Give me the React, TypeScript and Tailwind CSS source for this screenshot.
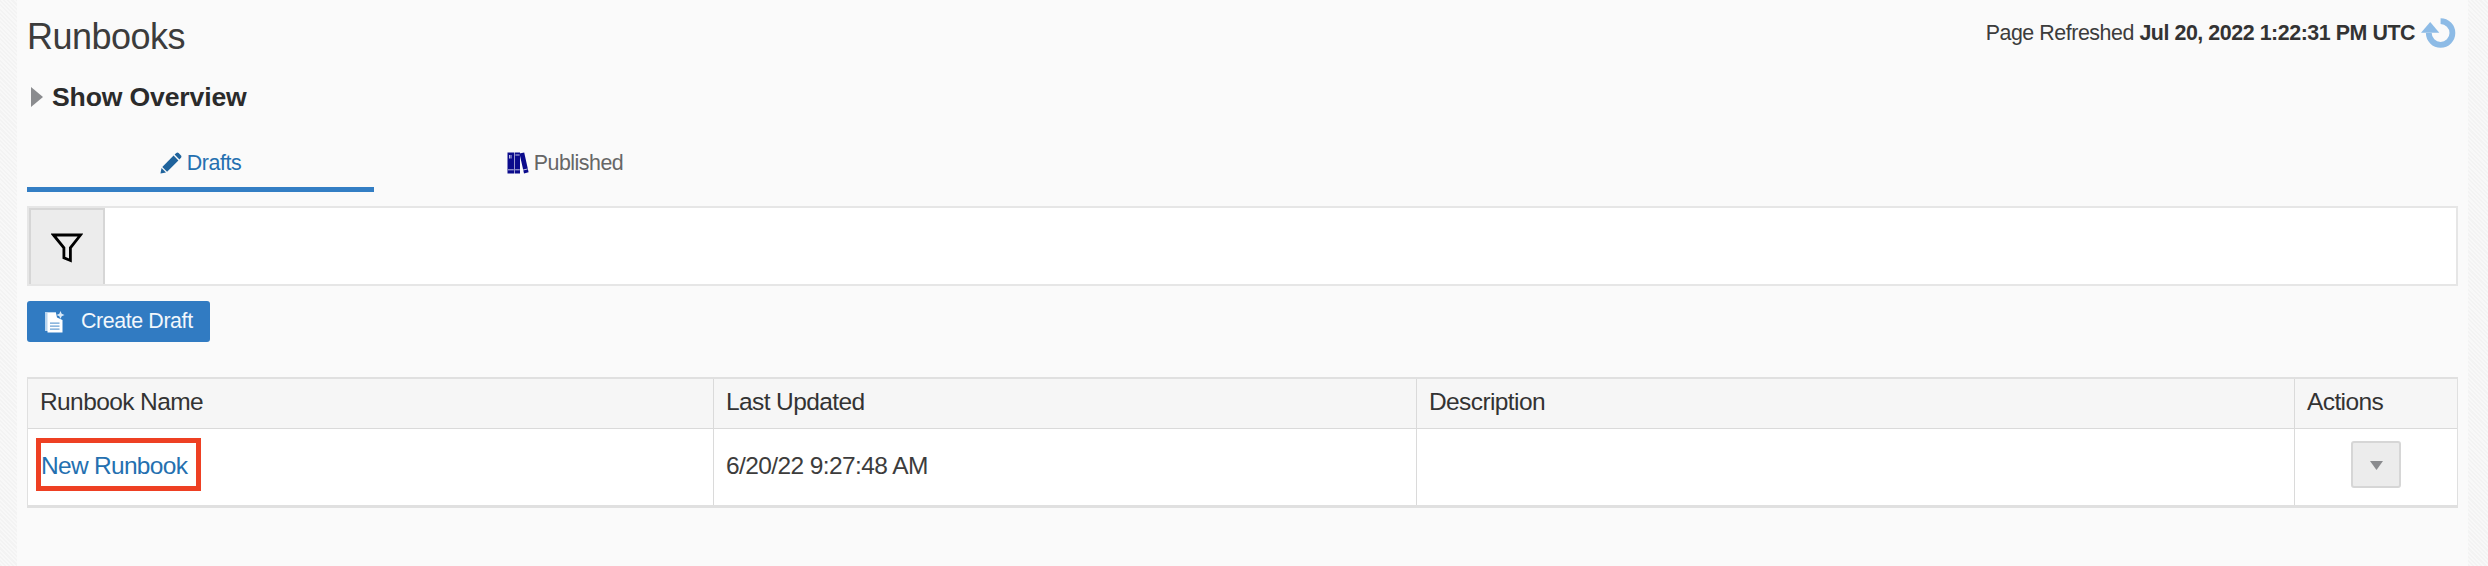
function PencilIcon() {
  return (
    <svg className="h-[22px] w-[22px]" viewBox="0 0 22 22" fill="#1f639c">
      <path d="M.5 21.5 1.5 16 6 20.5Z" />
      <path d="M2.3 15 13.6 3.6 18.4 8.4 7.1 19.7Z" />
      <path d="M14.6 2.6 16.3 1Q17.5 0 18.6 1L21 3.4Q22 4.5 21 5.7L19.4 7.4Z" />
    </svg>
  );
}

function BooksIcon() {
  return (
    <svg className="h-[22px] w-[22px]" viewBox="0 0 22 22">
      <path fill="#0b0b8c" d="M.5.5H7V21.5H.5ZM7.6.5H13V21.5H7.6ZM12.5 1.6 17.2.5 21.6 20.2 17 21.4Z" />
      <path stroke="#d4d4ee" strokeWidth=".9" d="M1 17.8H6.8M8.2 17.8H12.8M8.4 3H12.6M16 18 20.6 17M2.5 3V6.5M4 3V6.5" />
    </svg>
  );
}

function RefreshIcon() {
  return (
    <svg className="h-[32px] w-[36px]" viewBox="0 0 36 32">
      <path d="M19.6 4.2A11.8 11.8 0 1 1 7.8 16" fill="none" stroke="#8dbbe6" strokeWidth="5.8" />
      <path d="M0 15.8 9.2 5 18.3 15.8Z" fill="#8dbbe6" />
    </svg>
  );
}

function DraftIcon() {
  return (
    <svg className="h-[22px] w-[20px]" viewBox="0 0 20 22">
      <path fill="#b9d5ee" d="M0 1H11V3H3V20H0Z" />
      <path fill="#fff" d="M2.5 2H11L12 6.5 17.5 9V21.5H2.5Z" />
      <path fill="#d9e9f7" d="M15.5 0 16.7 2.8 19.5 4 16.7 5.2 15.5 8 14.3 5.2 11.5 4 14.3 2.8Z" />
      <path stroke="#69a0d4" strokeWidth="1.3" d="M5 12.2H14.5M5 15.2H14.5M5 18.2H14.5" />
    </svg>
  );
}

const hatch =
  "bg-[repeating-linear-gradient(45deg,#f3f3f3_0px,#f3f3f3_1.5px,#f8f8f8_1.5px,#f8f8f8_3px)]";

export default function App() {
  return (
    <div className="flex h-[566px] w-[2488px] overflow-hidden bg-[#fafafa] font-['Liberation_Sans',Arial,sans-serif] text-[21.4px] tracking-[-0.4px] text-[#3c3c3c]">
      <div className={`w-[17px] shrink-0 ${hatch}`} />
      <main className="flex grow flex-col px-[10px]">
        <header className="flex h-[72px] items-start justify-between">
          <h1 className="mt-[17px] text-[36px] leading-[40px] tracking-[-0.5px]">Runbooks</h1>
          <div className="flex items-center pt-[17px] pr-px leading-[32px]">
            <span className="-mt-px whitespace-pre tracking-[-0.45px]">
              Page Refreshed <b className="text-[#333]">Jul 20, 2022 1:22:31 PM UTC</b>
            </span>
            <button className="ml-[6px]" aria-label="Refresh">
              <RefreshIcon />
            </button>
          </div>
        </header>

        <button className="flex h-[50px] items-center self-start pl-[4px]">
          <svg className="h-[20px] w-[12px]" viewBox="0 0 12 20">
            <path d="M0 0 12 10 0 20Z" fill="#8a8b8e" />
          </svg>
          <span className="ml-[9px] text-[26.6px] leading-[30px] font-bold tracking-[-0.15px] text-[#2b2b2b]">Show Overview</span>
        </button>

        <nav className="flex h-[70px]">
          <button className="flex w-[347px] items-center justify-center gap-[5px] border-b-[5px] border-[#337ec4] pt-[19px] pb-[2px] text-[#2470b0]">
            <PencilIcon />
            <span>Drafts</span>
          </button>
          <button className="ml-px flex w-[380px] items-center justify-center gap-[5px] border-b-[5px] border-transparent pt-[19px] pb-[2px] text-[#666]">
            <BooksIcon />
            <span className="tracking-[-0.5px]">Published</span>
          </button>
        </nav>

        <div className="mt-[14px] flex h-[80px] border-2 border-[#e6e6e6] bg-white">
          <button className="flex w-[76px] items-center justify-center border-2 border-b-0 border-[#d6d6d6] bg-[#ececec] pt-[2px]" aria-label="Filter">
            <svg className="h-[30px] w-[32px]" viewBox="0 0 32 30">
              <path d="M2.5 2H29.5L19.4 14.8V27.5L12.9 24.8V14.8Z" fill="none" stroke="#000" strokeWidth="2.8" />
            </svg>
          </button>
        </div>

        <button className="mt-[15px] flex h-[41px] w-[183px] items-center self-start rounded-[3px] bg-[#317bc2] pl-[18px] text-[#f2f7fc]">
          <DraftIcon />
          <span className="ml-[16px]">Create Draft</span>
        </button>

        <table className="mt-[35px] w-full table-fixed border-separate border-spacing-0 border border-t-2 border-b-[3px] border-[#e0e0e0] text-left text-[24.5px] leading-[28px] tracking-[-0.6px]">
          <colgroup>
            <col className="w-[686px]" />
            <col className="w-[703px]" />
            <col />
            <col className="w-[162px]" />
          </colgroup>
          <thead className="bg-[#f6f6f6] text-[#333]">
            <tr className="h-[50px]">
              <th className="border-r border-b border-[#dadada] px-[12px] pb-[3px] font-normal">Runbook Name</th>
              <th className="border-r border-b border-[#dadada] px-[12px] pb-[3px] font-normal">Last Updated</th>
              <th className="border-r border-b border-[#dadada] px-[12px] pb-[3px] font-normal">Description</th>
              <th className="border-b border-[#dadada] px-[12px] pb-[3px] font-normal">Actions</th>
            </tr>
          </thead>
          <tbody className="bg-white">
            <tr className="h-[76px]">
              <td className="border-r border-[#dadada] pb-[5px] pl-[8px] align-middle">
                <a className="flex h-[53px] w-[165px] items-center border-[5px] border-[#ee4023] pt-[2px] tracking-[-0.7px] whitespace-nowrap text-[#2470b0]">
                  New Runbook
                </a>
              </td>
              <td className="border-r border-[#dadada] px-[12px] pb-[3px]">6/20/22 9:27:48 AM</td>
              <td className="border-r border-[#dadada]" />
              <td className="pb-[5px]">
                <button className="mx-auto flex h-[47px] w-[50px] items-center justify-center rounded-[3px] border-2 border-[#d6d6d6] bg-[#ececec]" aria-label="Actions">
                  <svg className="mt-[2px] h-[9px] w-[13px]" viewBox="0 0 13 9">
                    <path d="M0 0H13L6.5 9Z" fill="#8a8b8e" />
                  </svg>
                </button>
              </td>
            </tr>
          </tbody>
        </table>
      </main>
      <div className={`w-[20px] shrink-0 ${hatch}`} />
    </div>
  );
}
